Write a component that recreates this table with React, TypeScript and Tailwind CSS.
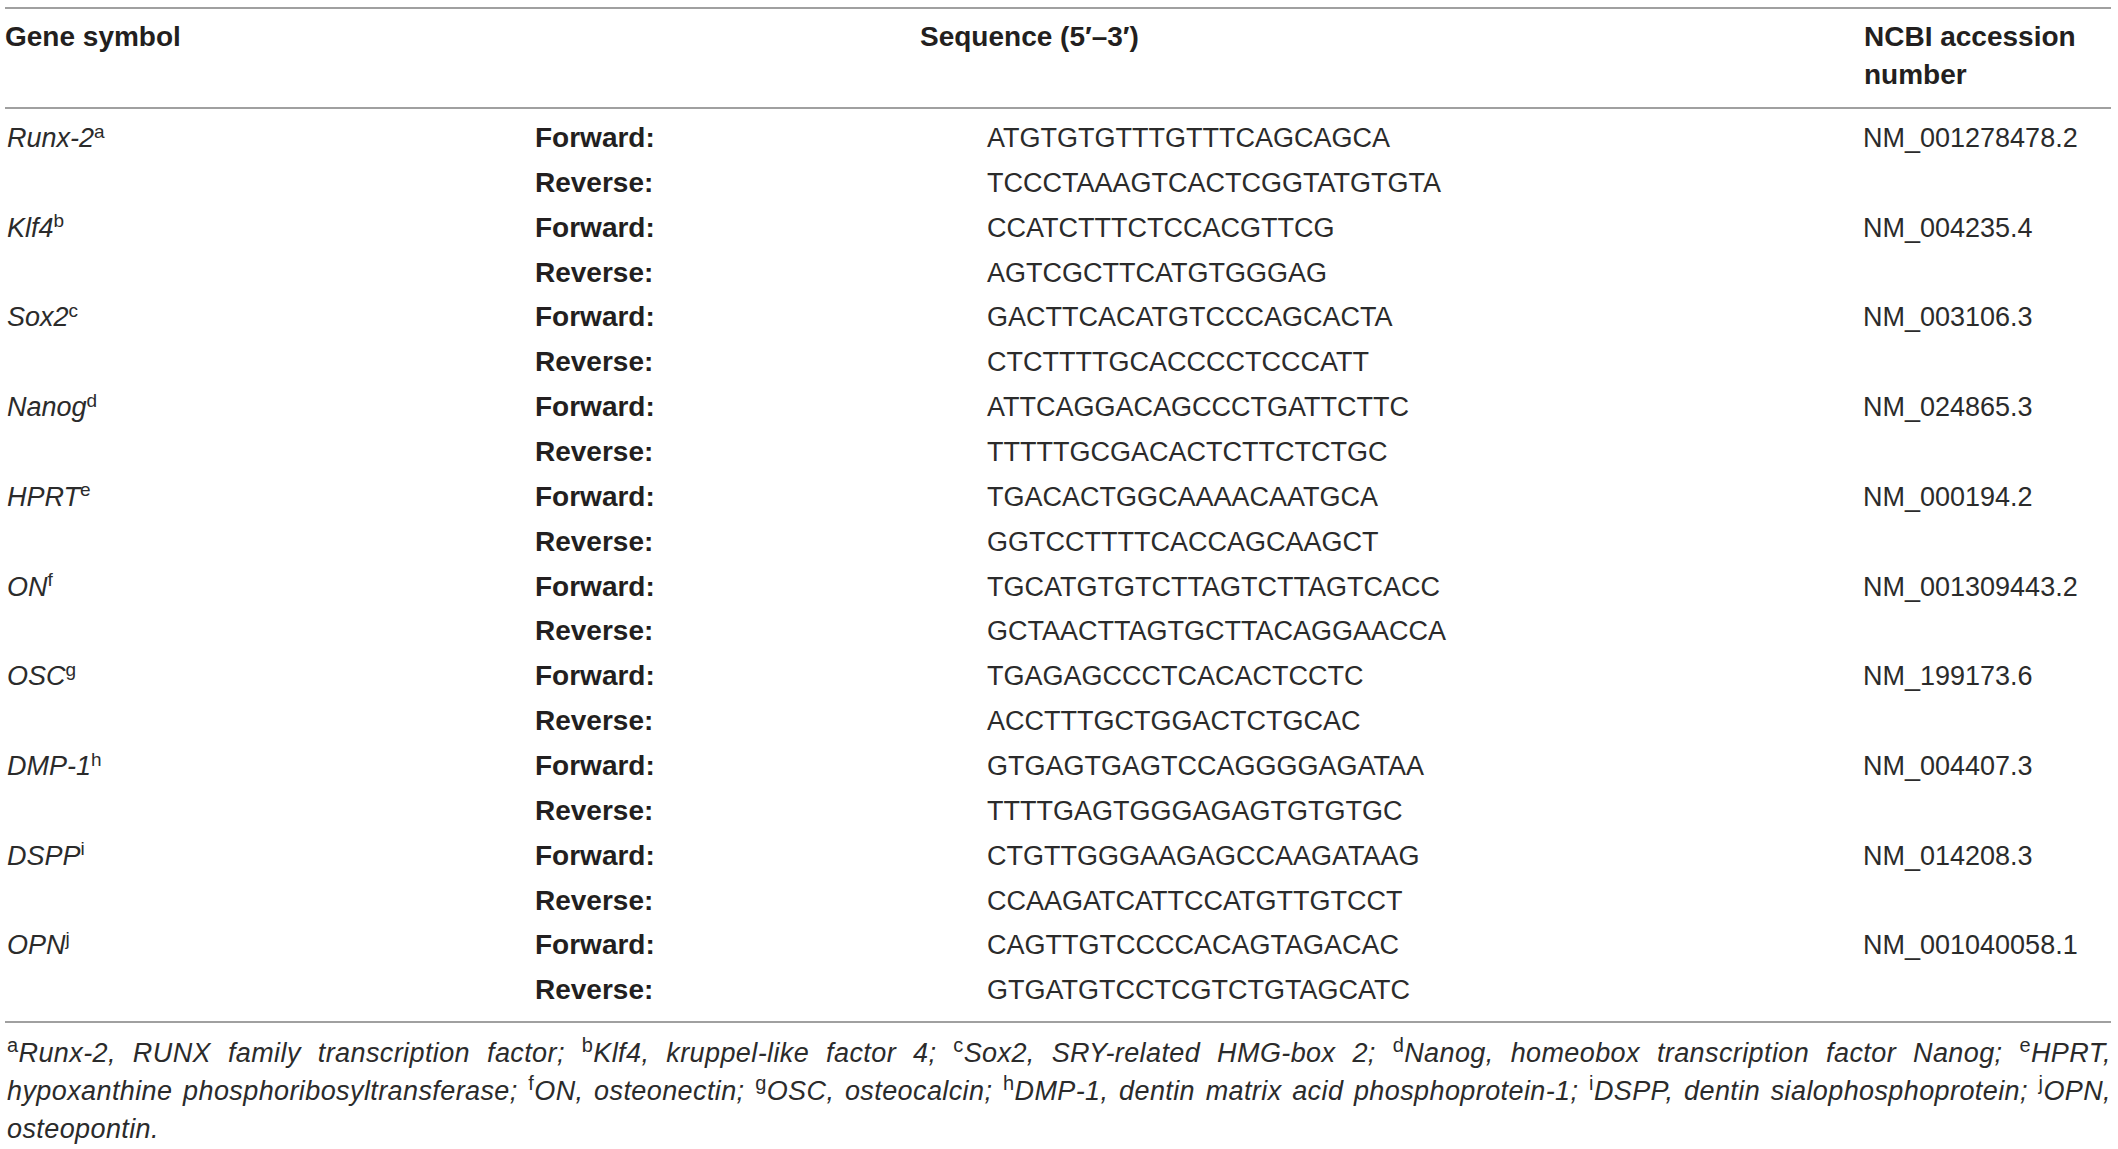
import { FC } from "react";

type Primer = {
  gene: string;
  note: string;
  forward: string;
  reverse: string;
  accession: string;
};

const primers: Primer[] = [
  { gene: "Runx-2", note: "a", forward: "ATGTGTGTTTGTTTCAGCAGCA", reverse: "TCCCTAAAGTCACTCGGTATGTGTA", accession: "NM_001278478.2" },
  { gene: "Klf4", note: "b", forward: "CCATCTTTCTCCACGTTCG", reverse: "AGTCGCTTCATGTGGGAG", accession: "NM_004235.4" },
  { gene: "Sox2", note: "c", forward: "GACTTCACATGTCCCAGCACTA", reverse: "CTCTTTTGCACCCCTCCCATT", accession: "NM_003106.3" },
  { gene: "Nanog", note: "d", forward: "ATTCAGGACAGCCCTGATTCTTC", reverse: "TTTTTGCGACACTCTTCTCTGC", accession: "NM_024865.3" },
  { gene: "HPRT", note: "e", forward: "TGACACTGGCAAAACAATGCA", reverse: "GGTCCTTTTCACCAGCAAGCT", accession: "NM_000194.2" },
  { gene: "ON", note: "f", forward: "TGCATGTGTCTTAGTCTTAGTCACC", reverse: "GCTAACTTAGTGCTTACAGGAACCA", accession: "NM_001309443.2" },
  { gene: "OSC", note: "g", forward: "TGAGAGCCCTCACACTCCTC", reverse: "ACCTTTGCTGGACTCTGCAC", accession: "NM_199173.6" },
  { gene: "DMP-1", note: "h", forward: "GTGAGTGAGTCCAGGGGAGATAA", reverse: "TTTTGAGTGGGAGAGTGTGTGC", accession: "NM_004407.3" },
  { gene: "DSPP", note: "i", forward: "CTGTTGGGAAGAGCCAAGATAAG", reverse: "CCAAGATCATTCCATGTTGTCCT", accession: "NM_014208.3" },
  { gene: "OPN", note: "j", forward: "CAGTTGTCCCCACAGTAGACAC", reverse: "GTGATGTCCTCGTCTGTAGCATC", accession: "NM_001040058.1" },
];

const cols = "grid grid-cols-[530px_452px_876px_1fr]";

const Note: FC<{ n: string; size?: string }> = ({ n, size = "text-[19px]" }) => (
  <sup className={`not-italic ${size} top-[-0.5em]`}>{n}</sup>
);

const App: FC = () => {
  return (
    <div className="w-[2118px] h-[1149px] bg-white text-[#231f20] font-['Liberation_Sans',Arial,sans-serif] pl-[5px] pt-[7px] overflow-hidden">
      <div className="w-[2106px]">
        <div className="border-t-2 border-b-2 border-[#a0a0a0]">
          {/* header */}
          <div className={`${cols} text-[28px] leading-[38px] font-bold pt-[9px] pb-[13px]`}>
            <div>Gene symbol</div>
            <div className="col-span-2 pl-[385px]">Sequence (5′–3′)</div>
            <div className="pl-[1px]">
              NCBI accession
              <br />
              number
            </div>
          </div>
        </div>

        <div className="border-b-2 border-[#a0a0a0] pt-[7px] pb-[8px]">
          {primers.map((p) => (
            <div key={p.gene} className={`${cols} text-[27px] leading-[44.86px] text-[#2b2b2b]`}>
              <div className="pl-[2px] italic">
                {p.gene}
                <Note n={p.note} />
              </div>
              <div className="font-bold text-[28px] text-[#231f20]">
                <div>Forward:</div>
                <div>Reverse:</div>
              </div>
              <div>
                <div>{p.forward}</div>
                <div>{p.reverse}</div>
              </div>
              <div>{p.accession}</div>
            </div>
          ))}
        </div>

        {/* footnotes */}
        <div className="pt-[11px] pl-[2px] text-[27px] tracking-[0.4px] leading-[38px] italic text-[#2b2b2b]">
          <div className="text-justify [text-align-last:justify] whitespace-nowrap">
            <Note n="a" size="text-[20px]" />Runx-2, RUNX family transcription factor; <Note n="b" size="text-[20px]" />Klf4, kruppel-like factor 4;{" "}
            <Note n="c" size="text-[20px]" />Sox2, SRY-related HMG-box 2; <Note n="d" size="text-[20px]" />Nanog, homeobox transcription factor Nanog;{" "}
            <Note n="e" size="text-[20px]" />HPRT,
          </div>
          <div className="text-justify [text-align-last:justify] whitespace-nowrap">
            hypoxanthine phosphoribosyltransferase; <Note n="f" size="text-[20px]" />ON, osteonectin; <Note n="g" size="text-[20px]" />OSC, osteocalcin;{" "}
            <Note n="h" size="text-[20px]" />DMP-1, dentin matrix acid phosphoprotein-1; <Note n="i" size="text-[20px]" />DSPP, dentin sialophosphoprotein;{" "}
            <Note n="j" size="text-[20px]" />OPN,
          </div>
          <div>osteopontin.</div>
        </div>
      </div>
    </div>
  );
};

export default App;
